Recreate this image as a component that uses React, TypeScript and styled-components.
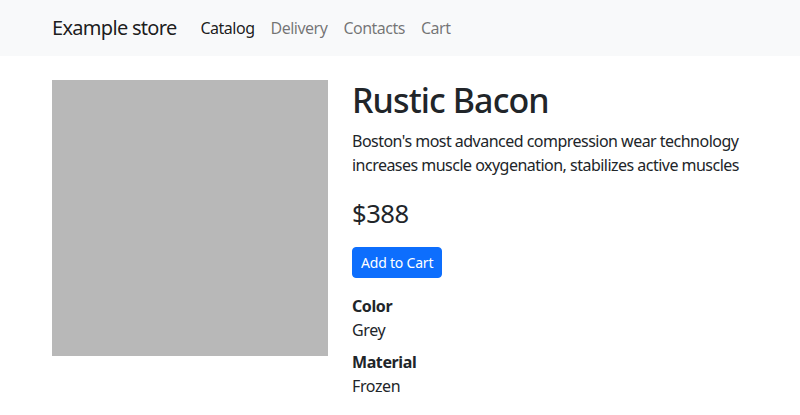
import React from "react";
import styled, { createGlobalStyle } from "styled-components";

const Global = createGlobalStyle`
  *, *::before, *::after { box-sizing: border-box; }
  body {
    margin: 0;
    font-family: "Noto Sans", "Open Sans", sans-serif;
    font-size: 16px;
    line-height: 1.5;
    color: #212529;
    background: #fff;
  }
`;

const Navbar = styled.nav`
  background: #f8f9fa;
  height: 56px;
  display: flex;
  align-items: center;
`;

const Container = styled.div`
  width: 720px;
  margin: 0 auto;
  padding: 0 12px;
`;

const NavInner = styled(Container)`
  display: flex;
  align-items: center;
`;

const Brand = styled.a`
  font-size: 20px;
  line-height: 30px;
  color: rgba(0, 0, 0, 0.9);
  text-decoration: none;
  margin-right: 16px;
  letter-spacing: -0.7px;
`;

const NavList = styled.div`
  display: flex;
`;

const NavLink = styled.a<{ $active?: boolean }>`
  padding: 8px;
  color: ${(p) => (p.$active ? "rgba(0,0,0,0.9)" : "rgba(0,0,0,0.55)")};
  text-decoration: none;
  letter-spacing: -0.5px;
`;

const Main = styled(Container)`
  margin-top: 24px;
  display: grid;
  grid-template-columns: 276px 1fr;
  column-gap: 24px;
`;

const ImageBox = styled.div`
  width: 276px;
  height: 276px;
  background: #b8b8b8;
`;

const Info = styled.div`
  display: flex;
  flex-direction: column;
  align-items: flex-start;
`;

const Title = styled.h1`
  font-size: 34px;
  font-weight: 500;
  line-height: 1.2;
  margin: 0 0 8px;
  letter-spacing: -0.9px;
`;

const Description = styled.p`
  margin: 0 0 16px;
  letter-spacing: -0.52px;
`;

const Price = styled.h3`
  font-size: 25.6px;
  font-weight: 400;
  line-height: 1.2;
  margin: 6px 0 17px;
  letter-spacing: -0.5px;
`;

const Button = styled.button`
  font-family: inherit;
  font-size: 14px;
  line-height: 21px;
  padding: 4px 8px;
  color: #fff;
  background: #0d6efd;
  border: 1px solid #0d6efd;
  border-radius: 4px;
  margin-bottom: 16px;
  letter-spacing: -0.2px;
`;

const Dl = styled.dl`
  margin: 0;
`;

const Dt = styled.dt`
  font-weight: 700;
  letter-spacing: -0.4px;
`;

const Dd = styled.dd`
  margin: 0 0 8px;
  letter-spacing: -0.4px;
`;

export default function App() {
  return (
    <>
      <Global />
      <Navbar>
        <NavInner>
          <Brand href="#">Example store</Brand>
          <NavList>
            <NavLink $active href="#">Catalog</NavLink>
            <NavLink href="#">Delivery</NavLink>
            <NavLink href="#">Contacts</NavLink>
            <NavLink href="#">Cart</NavLink>
          </NavList>
        </NavInner>
      </Navbar>
      <Main>
        <ImageBox />
        <Info>
          <Title>Rustic Bacon</Title>
          <Description>
            Boston's most advanced compression wear technology increases muscle oxygenation, stabilizes active muscles
          </Description>
          <Price>$388</Price>
          <Button>Add to Cart</Button>
          <Dl>
            <Dt>Color</Dt>
            <Dd>Grey</Dd>
            <Dt>Material</Dt>
            <Dd>Frozen</Dd>
          </Dl>
        </Info>
      </Main>
    </>
  );
}
